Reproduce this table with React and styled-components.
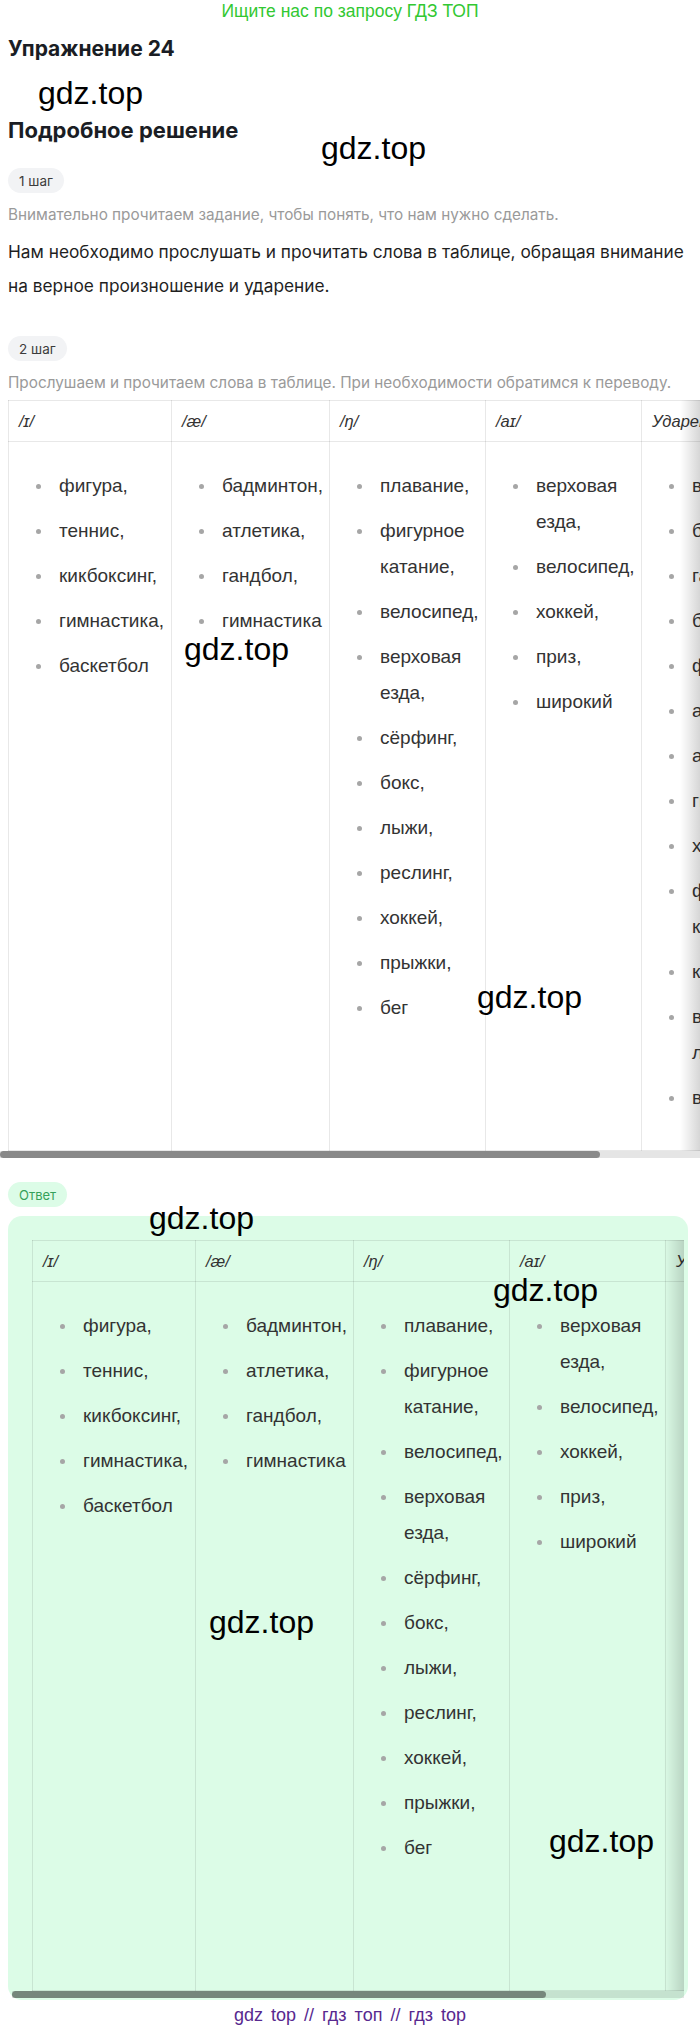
import React from 'react';
import styled, { createGlobalStyle } from 'styled-components';

const GlobalStyle = createGlobalStyle`
  html, body { margin: 0; padding: 0; background: #fff; }
  body { font-family: Inter, "Liberation Sans", sans-serif; color: #1f1f1f; }
  * { box-sizing: border-box; }
`;

const Page = styled.div`
  position: relative;
  width: 700px;
  padding: 0 8px;
  overflow: hidden;
`;

const Banner = styled.div`
  font-family: "Liberation Sans", Arial, sans-serif;
  font-size: 17.5px;
  line-height: 22px;
  color: #32c832;
  text-align: center;
`;

const Title = styled.h1`
  margin: 13px 0 0;
  font-size: 21px;
  line-height: 28px;
  font-weight: 700;
  color: #1a1d24;
`;

const Subtitle = styled.h2`
  margin: 8px 0 0;
  font-size: 22px;
  line-height: 26px;
  font-weight: 700;
  color: #1a1d24;
`;

const InlineMark = styled.div`
  margin: 15px 0 0 30px;
  font-family: "Liberation Sans", Arial, sans-serif;
  font-size: 32px;
  line-height: 31px;
  color: #000;
`;

const Mark = styled.div`
  position: absolute;
  left: ${p => p.$x}px;
  top: ${p => p.$y}px;
  font-family: "Liberation Sans", Arial, sans-serif;
  font-size: 32px;
  line-height: 31px;
  color: #000;
  pointer-events: none;
`;

const Tag = styled.div`
  display: inline-flex;
  align-items: center;
  height: 25px;
  padding: 0 11px;
  margin-top: ${p => p.$mt}px;
  border-radius: 13px;
  background: ${p => (p.$green ? '#dcfce7' : '#f2f3f5')};
  color: ${p => (p.$green ? '#35a15a' : '#3c3c3c')};
  font-size: ${p => (p.$green ? 13 : 13.5)}px;
`;

const Hint = styled.p`
  margin: 11px 0 0;
  font-size: 15.3px;
  line-height: 22px;
  color: #9a9a9a;
`;

const Text = styled.p`
  margin: 9px 0 0;
  font-size: 17.3px;
  line-height: 34px;
  color: #1f1f1f;
`;

const TableWrap = styled.div`
  position: relative;
  margin: ${p => (p.$bleed ? '6px -8px 0' : '0')};
`;

const Scroller = styled.div`
  overflow: hidden;
  padding: ${p => (p.$bleed ? '0 8px' : '20px 20px 0')};
`;

const Track = styled.div`
  height: 7px;
  background: rgba(0, 0, 0, 0.1);
`;

const Thumb = styled.div`
  width: ${p => p.$ratio}%;
  height: 100%;
  border-radius: 4px;
  background: rgba(0, 0, 0, 0.4);
`;

const Fade = styled.div`
  position: absolute;
  right: 0;
  top: ${p => p.$top}px;
  bottom: 7px;
  width: 20px;
  background: linear-gradient(to right, rgba(0, 0, 0, 0), rgba(0, 0, 0, 0.16));
  pointer-events: none;
`;

const Table = styled.table`
  width: 809px;
  table-layout: fixed;
  border-collapse: collapse;
  font-family: "Liberation Sans", Arial, sans-serif;
`;

const Col = styled.col`
  width: ${p => p.$w}px;
`;

const Th = styled.th`
  padding: 10px;
  border: 1px solid rgba(0, 0, 0, 0.09);
  text-align: left;
  font-weight: 400;
  font-style: italic;
  font-size: 16.5px;
  line-height: 20px;
  color: #333;
  white-space: nowrap;
  overflow: hidden;
`;

const Td = styled.td`
  padding: 10px;
  border: 1px solid rgba(0, 0, 0, 0.09);
  vertical-align: top;
`;

const List = styled.ul`
  list-style: none;
  margin: 0;
  padding: 16px 0 24px;
  display: flex;
  flex-direction: column;
  gap: 9px;
`;

const Item = styled.li`
  display: flex;
  width: min-content;
  font-size: 19px;
  line-height: 36px;
  color: #333;
  &::before {
    content: '';
    flex: none;
    width: 5px;
    height: 5px;
    margin: 15.5px 18px 0 17px;
    border-radius: 50%;
    background: #a6a6a6;
  }
`;

const AnswerBox = styled.div`
  margin-top: 9px;
  width: 680px;
  padding: 4px 4px 2px;
  border-radius: 14px;
  background: #dcfce7;
`;

const Footer = styled.div`
  margin-top: 4px;
  text-align: center;
  font-family: "Liberation Sans", Arial, sans-serif;
  font-size: 18px;
  line-height: 22px;
  color: #58298f;
  word-spacing: 3px;
`;

const columns = [
  { head: '/ɪ/', items: ['фигура,', 'теннис,', 'кикбоксинг,', 'гимнастика,', 'баскетбол'] },
  { head: '/æ/', items: ['бадминтон,', 'атлетика,', 'гандбол,', 'гимнастика'] },
  {
    head: '/ŋ/',
    items: ['плавание,', 'фигурное катание,', 'велосипед,', 'верховая езда,', 'сёрфинг,', 'бокс,', 'лыжи,', 'реслинг,', 'хоккей,', 'прыжки,', 'бег'],
  },
  { head: '/aɪ/', items: ['верховая езда,', 'велосипед,', 'хоккей,', 'приз,', 'широкий'] },
  {
    head: 'Ударение',
    items: ['волейбол,', 'бадминтон,', 'гандбол,', 'баскетбол,', 'футбол,', 'атлетика,', 'аэробика,', 'гимнастика,', 'хоккей,', 'фигурное катание,', 'кикбоксинг,', 'водные лыжи,', 'велоспорт'],
  },
];

const widths = [163, 158, 156, 156, 176];

function WordTable({ bleed }) {
  return (
    <TableWrap $bleed={bleed}>
      <Scroller $bleed={bleed}>
        <Table>
          <colgroup>
            {widths.map((w, i) => (
              <Col key={i} $w={w} />
            ))}
          </colgroup>
          <thead>
            <tr>
              {columns.map(c => (
                <Th key={c.head}>{c.head}</Th>
              ))}
            </tr>
          </thead>
          <tbody>
            <tr>
              {columns.map(c => (
                <Td key={c.head}>
                  <List>
                    {c.items.map((it, i) => (
                      <Item key={i}>{it}</Item>
                    ))}
                  </List>
                </Td>
              ))}
            </tr>
          </tbody>
        </Table>
      </Scroller>
      <Track>
        <Thumb $ratio={bleed ? 85.7 : 79.4} />
      </Track>
      <Fade $top={bleed ? 0 : 20} />
    </TableWrap>
  );
}

const marks = [
  [321, 133],
  [184, 634],
  [477, 982],
  [149, 1203],
  [493, 1275],
  [209, 1607],
  [549, 1826],
];

export default function App() {
  return (
    <>
      <GlobalStyle />
      <Page>
        <Banner>Ищите нас по запросу ГДЗ ТОП</Banner>
        <Title>Упражнение 24</Title>
        <InlineMark>gdz.top</InlineMark>
        <Subtitle>Подробное решение</Subtitle>
        <Tag $mt={25}>1 шаг</Tag>
        <Hint>Внимательно прочитаем задание, чтобы понять, что нам нужно сделать.</Hint>
        <Text>
          Нам необходимо прослушать и прочитать слова в таблице, обращая внимание на верное произношение и ударение.
        </Text>
        <Tag $mt={33}>2 шаг</Tag>
        <Hint>Прослушаем и прочитаем слова в таблице. При необходимости обратимся к переводу.</Hint>
        <WordTable bleed />
        <Tag $mt={24} $green>
          Ответ
        </Tag>
        <AnswerBox>
          <WordTable />
        </AnswerBox>
        <Footer>gdz top // гдз топ // гдз top</Footer>
        {marks.map(([x, y]) => (
          <Mark key={`${x}-${y}`} $x={x} $y={y}>
            gdz.top
          </Mark>
        ))}
      </Page>
    </>
  );
}
